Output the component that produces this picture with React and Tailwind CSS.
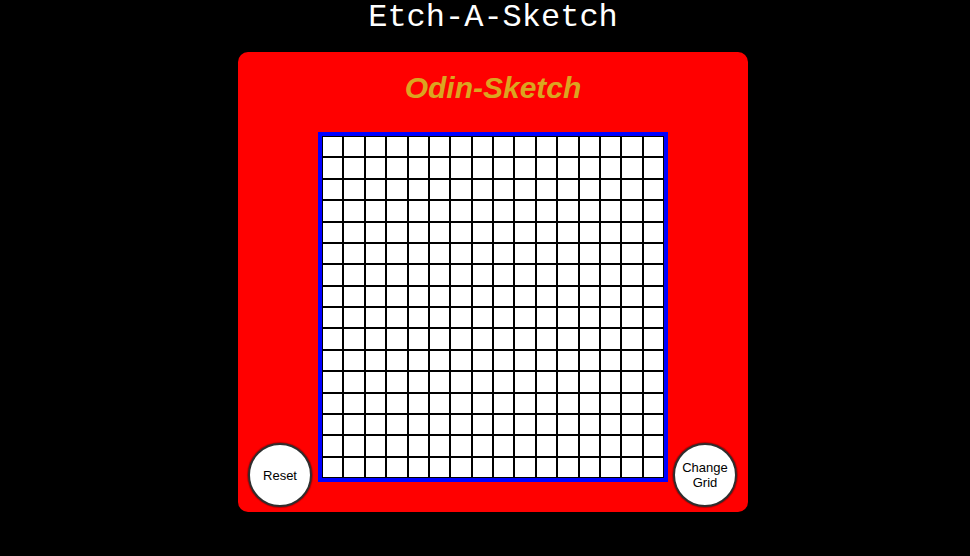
export default function App() {
  const cells = Array.from({ length: 256 });
  return (
    <div className="min-h-screen w-full bg-black pl-4 flex flex-col items-center" style={{ fontFamily: '"Liberation Sans", Arial, sans-serif' }}>
      <h1 className="m-0 text-[32px] leading-[36px] font-normal text-white" style={{ fontFamily: '"Liberation Mono", "Courier New", monospace' }}>
        Etch-A-Sketch
      </h1>
      <div className="mt-[16px] w-[510px] h-[460px] bg-[#ff0000] rounded-[10px] flex flex-col items-center pt-[19px]">
        <h2 className="m-0 text-[30px] leading-[34px] font-bold italic text-[#daa520]">Odin-Sketch</h2>
        <div className="mt-[27px] w-full flex flex-row items-end pl-[10px]">
          <button className="w-[64px] h-[64px] rounded-full bg-white border-2 border-[#2e2e2e] text-[13px] leading-[15px] text-black flex items-center justify-center shadow-[0_0_1px_1px_rgba(0,0,0,0.3)]">
            Reset
          </button>
          <div className="ml-[6px] mb-[25px] w-[350px] h-[350px] border-4 border-[#0000ff] grid grid-cols-16 grid-rows-16 bg-white">
            {cells.map((_, i) => (
              <div key={i} className="border border-black bg-white" />
            ))}
          </div>
          <button className="ml-[5px] w-[64px] h-[64px] rounded-full bg-white border-2 border-[#2e2e2e] text-[13px] leading-[15px] text-black flex items-center justify-center text-center px-1 shadow-[0_0_1px_1px_rgba(0,0,0,0.3)]">
            Change Grid
          </button>
        </div>
      </div>
    </div>
  );
}
